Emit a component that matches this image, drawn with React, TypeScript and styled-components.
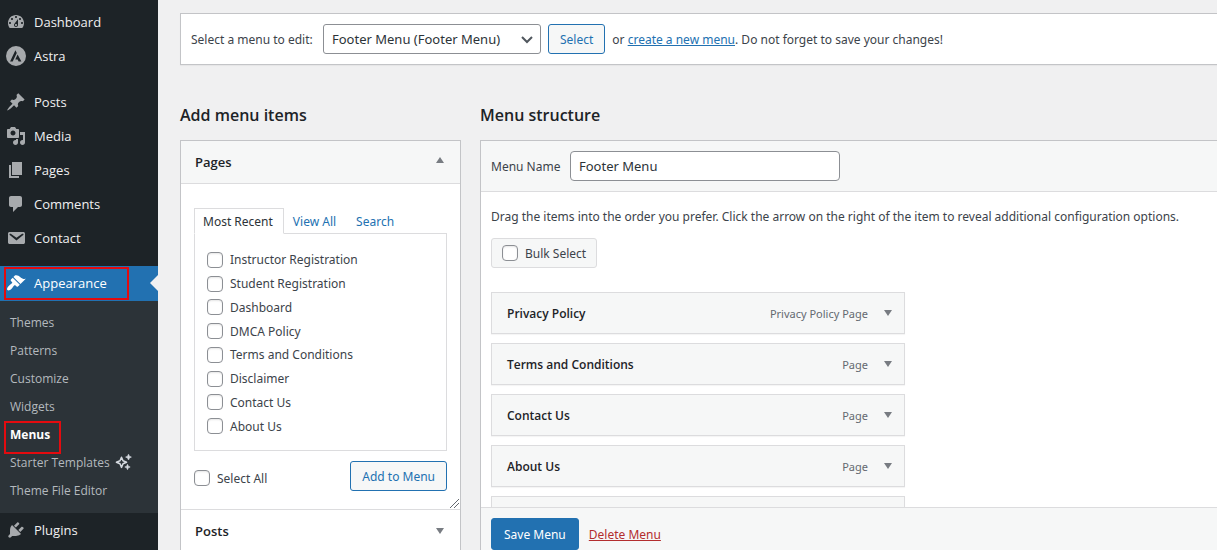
import React from "react";
import styled, { createGlobalStyle, css } from "styled-components";

const GlobalStyle = createGlobalStyle`
  *, *::before, *::after { box-sizing: border-box; }
  body {
    margin: 0;
    background: #f0f0f1;
    color: #3c434a;
    font-family: "Noto Sans", sans-serif;
    font-size: 12px;
    line-height: 19px;
  }
  h2, h3, p, ul { margin: 0; padding: 0; }
  ul { list-style: none; }
  button, input, select { font-family: inherit; }
`;

const Shell = styled.div`
  display: flex;
  height: 100vh;
  overflow: hidden;
`;

/* ---------- Admin sidebar ---------- */

const Sidebar = styled.nav`
  flex: 0 0 158px;
  background: #1d2327;
  padding-top: 5px;
  font-family: "Open Sans", sans-serif;
`;

const SideGroup = styled.div`
  padding: 12px 0 11px;
`;

const SideLink = styled.a<{ $current?: boolean }>`
  position: relative;
  display: flex;
  align-items: center;
  gap: 8px;
  height: ${(p) => (p.$current ? "35px" : "34px")};
  padding-left: 6px;
  background: ${(p) => (p.$current ? "#2271b1" : "transparent")};
  color: ${(p) => (p.$current ? "#ffffff" : "#f0f0f1")};
  font-size: 13px;
  line-height: 18px;
  text-decoration: none;

  svg {
    width: 20px;
    height: 20px;
    fill: ${(p) => (p.$current ? "#ffffff" : "#a7aaad")};
  }

  ${(p) =>
    p.$current &&
    css`
      padding-bottom: 1px;

      &::after {
        content: "";
        position: absolute;
        right: 0;
        top: 9px;
        border: 8px solid transparent;
        border-left-width: 0;
        border-right-color: #f0f0f1;
      }
    `}
`;

const SubMenu = styled.ul`
  background: #2c3338;
  padding: 7px 0 9px;
`;

const SubLink = styled.a<{ $current?: boolean }>`
  position: relative;
  display: flex;
  align-items: center;
  gap: 5px;
  height: 28px;
  padding-left: 10px;
  color: ${(p) => (p.$current ? "#ffffff" : "#b4b9be")};
  font-weight: ${(p) => (p.$current ? 700 : 400)};
  text-decoration: none;
`;

const Highlight = styled.span<{ $width: number }>`
  position: absolute;
  left: 4px;
  top: 1px;
  width: ${(p) => p.$width}px;
  height: 33px;
  border: 2px solid #e30b0f;
  pointer-events: none;
  z-index: 1;
`;

/* ---------- Shared controls ---------- */

const Button = styled.button<{ $primary?: boolean }>`
  height: ${(p) => (p.$primary ? "32px" : "30px")};
  padding: 0 ${(p) => (p.$primary ? "12px" : "11px")};
  border: 1px solid #2271b1;
  border-radius: 3px;
  background: ${(p) => (p.$primary ? "#2271b1" : "#f6f7f7")};
  color: ${(p) => (p.$primary ? "#ffffff" : "#2271b1")};
  font-size: 12px;
  line-height: 19px;
  white-space: nowrap;
`;

const CheckLabel = styled.label`
  display: flex;
  align-items: center;
  gap: 7px;
`;

const Checkbox = styled.input.attrs({ type: "checkbox" })`
  appearance: none;
  flex: none;
  width: 16px;
  height: 16px;
  margin: 0;
  border: 1px solid #8c8f94;
  border-radius: 4px;
  background: #ffffff;
  box-shadow: inset 0 1px 2px rgba(0, 0, 0, 0.1);
`;

const TextLink = styled.a<{ $danger?: boolean }>`
  color: ${(p) => (p.$danger ? "#b32d2e" : "#2271b1")};
`;

const FieldLabel = styled.label<{ $width: number }>`
  min-width: ${(p) => p.$width}px;
`;

/* ---------- Main column ---------- */

const Main = styled.main`
  flex: 1;
  min-width: 0;
  display: flex;
  flex-direction: column;
  padding: 13px 0 0 22px;
`;

const ManageBar = styled.form`
  display: flex;
  align-items: center;
  gap: 7px;
  padding: 10px;
  border: 1px solid #c3c4c7;
  border-right: 0;
  background: #ffffff;
  box-shadow: 0 1px 1px rgba(0, 0, 0, 0.04);
`;

const SelectWrap = styled.div`
  position: relative;
  width: 218px;

  svg {
    position: absolute;
    right: 8px;
    top: 11px;
    pointer-events: none;
  }
`;

const Select = styled.select`
  appearance: none;
  display: block;
  width: 100%;
  height: 30px;
  padding: 0 24px 0 8px;
  border: 1px solid #8c8f94;
  border-radius: 3px;
  background: #ffffff;
  color: #2c3338;
  font-size: 13px;
`;

const Columns = styled.div`
  flex: 1;
  min-height: 0;
  display: grid;
  grid-template-columns: 281px minmax(0, 1fr);
  column-gap: 19px;
  padding-top: 38px;
`;

const Column = styled.section`
  display: flex;
  flex-direction: column;
  min-height: 0;
`;

const Heading = styled.h2`
  color: #1d2327;
  font-family: "Open Sans", sans-serif;
  font-size: 16px;
  font-weight: 600;
  line-height: 24px;
  margin-bottom: 13px;
`;

const Accordion = styled.div`
  border: 1px solid #c3c4c7;
  border-bottom: 0;
  background: #ffffff;
  flex: 1;
`;

const AccordionHead = styled.button<{ $open?: boolean }>`
  display: flex;
  align-items: center;
  justify-content: space-between;
  width: 100%;
  height: 43px;
  padding: 0 16px 0 14px;
  border: 0;
  border-bottom: 1px solid #dcdcde;
  background: ${(p) => (p.$open ? "#f6f7f7" : "#ffffff")};
  color: #1d2327;
  font-family: "Open Sans", sans-serif;
  font-size: 13px;
  font-weight: 600;
`;

const AccordionBody = styled.div`
  position: relative;
  padding: 24px 13px 18px;
  border-bottom: 1px solid #dcdcde;
`;

const Grip = styled.svg`
  position: absolute;
  right: 1px;
  bottom: 1px;
`;

const Tabs = styled.div`
  display: flex;
  margin-bottom: -1px;
`;

const Tab = styled.a<{ $active?: boolean }>`
  position: relative;
  height: 26px;
  padding: 3px 10px 3px 8px;
  border: 1px solid ${(p) => (p.$active ? "#dcdcde" : "transparent")};
  border-bottom-color: ${(p) => (p.$active ? "#ffffff" : "transparent")};
  background: ${(p) => (p.$active ? "#ffffff" : "transparent")};
  color: ${(p) => (p.$active ? "#2c3338" : "#2271b1")};
  text-decoration: none;
`;

const TabPanel = styled.div`
  padding: 14px 12px 12px;
  border: 1px solid #dcdcde;
`;

const PageList = styled.ul`
  display: grid;
  grid-auto-rows: 1fr;
  height: 190px;
  align-items: center;
`;

const PanelActions = styled.div`
  display: flex;
  align-items: center;
  justify-content: space-between;
  padding-top: 10px;

  ${CheckLabel} {
    padding-top: 4px;
  }
`;

const Structure = styled.div`
  flex: 1;
  min-height: 0;
  display: flex;
  flex-direction: column;
  border: solid #c3c4c7;
  border-width: 1px 0 0 1px;
  background: #ffffff;
`;

const NameBar = styled.div`
  display: flex;
  align-items: center;
  gap: 8px;
  padding: 10px;
  border-bottom: 1px solid #dcdcde;
  background: #f6f7f7;
`;

const NameInput = styled.input`
  width: 270px;
  height: 30px;
  padding: 0 8px;
  border: 1px solid #8c8f94;
  border-radius: 4px;
  background: #ffffff;
  color: #2c3338;
  font-size: 13px;
`;

const StructureBody = styled.div`
  flex: 1;
  min-height: 0;
  overflow: hidden;
  padding: 15px 10px 0;
`;

const BulkSelect = styled(CheckLabel)`
  width: max-content;
  height: 30px;
  margin: 12px 0 24px;
  padding: 0 10px;
  border: 1px solid #dcdcde;
  border-radius: 3px;
  background: #f6f7f7;
`;

const MenuItems = styled.ul`
  display: flex;
  flex-direction: column;
  gap: 9px;
  max-width: 414px;
`;

const MenuItem = styled.li`
  display: flex;
  align-items: center;
  height: 42px;
  padding: 0 12px 0 15px;
  border: 1px solid #dcdcde;
  background: #f6f7f7;
  box-shadow: 0 1px 1px rgba(0, 0, 0, 0.04);
`;

const ItemTitle = styled.span`
  flex: 1;
  color: #1d2327;
  font-family: "Open Sans", sans-serif;
  font-weight: 600;
`;

const ItemType = styled.span`
  color: #646970;
  font-size: 11px;
  margin-right: 16px;
`;

const ArrowButton = styled.button`
  display: flex;
  padding: 0;
  border: 0;
  background: none;
`;

const StructureFooter = styled.div`
  display: flex;
  align-items: center;
  gap: 10px;
  padding: 10px 10px 0;
  border-top: 1px solid #dcdcde;
  background: #f6f7f7;
`;

/* ---------- Drawings ---------- */

const Arrow = ({ up }: { up?: boolean }) => (
  <svg width="8" height="10" viewBox="0 0 8 10" aria-hidden="true">
    <path d={up ? "M0 6 4 0l4 6z" : "M0 2h8L4 8z"} fill="#787c82" />
  </svg>
);

const icons: Record<string, string> = {
  dashboard:
    "M3.76 16h12.48c1.1-1.37 1.76-3.11 1.76-5 0-4.42-3.58-8-8-8s-8 3.58-8 8c0 1.89.66 3.63 1.76 5zM10 4c.55 0 1 .45 1 1s-.45 1-1 1-1-.45-1-1 .45-1 1-1zM6 6c.55 0 1 .45 1 1s-.45 1-1 1-1-.45-1-1 .45-1 1-1zm8 0c.55 0 1 .45 1 1s-.45 1-1 1-1-.45-1-1 .45-1 1-1zm-5.37 5.55L12 7v6c0 1.1-.9 2-2 2s-2-.9-2-2c0-.57.24-1.08.63-1.45zM4 10c.55 0 1 .45 1 1s-.45 1-1 1-1-.45-1-1 .45-1 1-1zm12 0c.55 0 1 .45 1 1s-.45 1-1 1-1-.45-1-1 .45-1 1-1zm-5 3c0-.55-.45-1-1-1s-1 .45-1 1 .45 1 1 1 1-.45 1-1z",
  astra:
    "M10 0a10 10 0 1 0 0 20 10 10 0 0 0 0-20zM9.4 4.2l1.4 2.9-4.1 8.4H4.1zM11.6 8.600l3.800 6.900h-2.800l-1-2H9.300z",
  posts:
    "M10.44 3.02l1.82-1.82 6.36 6.35-1.83 1.82c-1.05-.68-2.48-.57-3.41.36l-.75.75c-.92.93-1.04 2.35-.35 3.41l-1.83 1.82-2.41-2.41-2.8 2.79c-.42.42-3.38 2.71-3.8 2.29s1.86-3.39 2.28-3.81l2.79-2.79L4.1 9.36l1.83-1.82c1.05.69 2.48.57 3.4-.36l.75-.75c.93-.92 1.05-2.35.36-3.41z",
  media:
    "M13 11V4c0-.55-.45-1-1-1h-1.67L9 1H5L3.67 3H2c-.55 0-1 .45-1 1v7c0 .55.45 1 1 1h10c.55 0 1-.45 1-1zM7 4.5c1.38 0 2.5 1.12 2.5 2.5S8.38 9.5 7 9.5 4.5 8.38 4.5 7 5.62 4.5 7 4.5zM14 6h5v10.5c0 1.38-1.12 2.5-2.5 2.5S14 17.88 14 16.5s1.12-2.5 2.5-2.5c.17 0 .34.02.5.05V9h-3V6zm-4 8.05V13h2v3.5c0 1.38-1.12 2.5-2.5 2.5S7 17.88 7 16.5 8.12 14 9.5 14c.17 0 .34.02.5.05z",
  pages: "M6 15V2h10v13H6zm-1 1h8v2H3V5h2v11z",
  comments:
    "M5 2h9c1.1 0 2 .9 2 2v7c0 1.1-.9 2-2 2h-2l-5 5v-5H5c-1.1 0-2-.9-2-2V4c0-1.1.9-2 2-2z",
  contact:
    "M3.87 4h13.25C18.37 4 19 4.59 19 5.79v8.42c0 1.19-.63 1.79-1.88 1.79H3.87c-1.25 0-1.88-.6-1.88-1.79V5.79c0-1.2.63-1.79 1.88-1.79zm6.62 8.6l6.74-5.53c.24-.2.43-.66.13-1.07-.29-.41-.82-.42-1.17-.17l-5.7 3.86L4.8 5.83c-.35-.25-.88-.24-1.17.17-.3.41-.11.87.13 1.07z",
  appearance:
    "M14.48 11.06L7.41 3.99l1.5-1.5c.5-.56 2.3-.47 3.51.32 1.21.8 1.43 1.28 2.91 2.1 1.18.64 2.45 1.26 4.45.85zm-.71.71L6.7 4.7 4.93 6.47c-.39.39-.39 1.02 0 1.41l1.06 1.06c.39.39.39 1.03 0 1.42-.6.6-1.43 1.11-2.21 1.69-.35.26-.7.53-1.01.84C1.43 14.23.4 16.08 1.4 17.07c.99 1 2.84-.03 4.18-1.36.31-.31.58-.66.85-1.02.57-.78 1.08-1.61 1.69-2.21.39-.39 1.02-.39 1.41 0l1.06 1.06c.39.39 1.02.39 1.41 0z",
  plugins:
    "M13.11 4.36L9.87 7.6 8 5.73l3.24-3.24c.35-.34 1.05-.2 1.56.32.52.51.66 1.21.31 1.55zm-8 1.77l.91-1.12 9.01 9.01-1.19.84c-.71.71-2.63 1.16-3.82 1.16H6.14L4.9 17.26c-.59.59-1.54.59-2.12 0-.59-.58-.59-1.53 0-2.12l1.24-1.24v-3.88c0-1.13.4-3.19 1.09-3.89zm7.26 3.97l3.24-3.24c.34-.35 1.04-.21 1.55.31.52.51.66 1.21.31 1.55l-3.24 3.25z",
};

const Icon = ({ name }: { name: string }) => (
  <svg viewBox="0 0 20 20" aria-hidden="true">
    <path d={icons[name]} fillRule={name === "astra" ? "evenodd" : "nonzero"} />
  </svg>
);

const Sparkles = () => (
  <svg width="18" height="18" viewBox="0 0 18 18" fill="none" stroke="#d5dae0" aria-hidden="true">
    <path d="M6.5 4.2 8 7.8l3.600 1.500L8 10.800l-1.500 3.600L5 10.800 1.400 9.300 5 7.800z" strokeWidth="1.500" strokeLinejoin="round" />
    <path d="M13.500 1.200l.9 2 2 .9-2 .9-.9 2-.9-2-2-.9 2-.9zM12.500 11.300l.8 1.900 1.900.8-1.900.8-.8 1.900-.8-1.900-1.900-.8 1.900-.8z" fill="#d5dae0" strokeWidth=".6" />
  </svg>
);

/* ---------- Data ---------- */

const content = [
  { label: "Posts", icon: "posts" },
  { label: "Media", icon: "media" },
  { label: "Pages", icon: "pages" },
  { label: "Comments", icon: "comments" },
  { label: "Contact", icon: "contact" },
];

const appearanceLinks = [
  "Themes",
  "Patterns",
  "Customize",
  "Widgets",
  "Menus",
  "Starter Templates",
  "Theme File Editor",
];

const pages = [
  "Instructor Registration",
  "Student Registration",
  "Dashboard",
  "DMCA Policy",
  "Terms and Conditions",
  "Disclaimer",
  "Contact Us",
  "About Us",
];

const menuItems = [
  { title: "Privacy Policy", type: "Privacy Policy Page" },
  { title: "Terms and Conditions", type: "Page" },
  { title: "Contact Us", type: "Page" },
  { title: "About Us", type: "Page" },
];

export default function App() {
  return (
    <Shell>
      <GlobalStyle />
      <Sidebar aria-label="Main menu">
        <SideLink href="#dashboard"><Icon name="dashboard" />Dashboard</SideLink>
        <SideLink href="#astra"><Icon name="astra" />Astra</SideLink>
        <SideGroup>
          {content.map((item) => (
            <SideLink key={item.label} href={`#${item.icon}`}>
              <Icon name={item.icon} />
              {item.label}
            </SideLink>
          ))}
        </SideGroup>
        <SideLink href="#appearance" $current>
          <Icon name="appearance" />
          Appearance
          <Highlight $width={125} />
        </SideLink>
        <SubMenu>
          {appearanceLinks.map((label) => (
            <li key={label}>
              <SubLink href="#appearance" $current={label === "Menus"}>
                {label}
                {label === "Starter Templates" && <Sparkles />}
                {label === "Menus" && <Highlight $width={57} />}
              </SubLink>
            </li>
          ))}
        </SubMenu>
        <SideLink href="#plugins"><Icon name="plugins" />Plugins</SideLink>
      </Sidebar>

      <Main>
        <ManageBar onSubmit={(e) => e.preventDefault()}>
          <FieldLabel htmlFor="menu-select" $width={125}>Select a menu to edit:</FieldLabel>
          <SelectWrap>
            <Select id="menu-select">
              <option>Footer Menu (Footer Menu)</option>
            </Select>
            <svg width="12" height="10" viewBox="0 0 12 10" aria-hidden="true">
              <path d="M1 2l5 5 5-5" fill="none" stroke="#50575e" strokeWidth="2" />
            </svg>
          </SelectWrap>
          <Button type="submit">Select</Button>
          <span>
            or <TextLink href="#new">create a new menu</TextLink>. Do not forget to save your changes!
          </span>
        </ManageBar>

        <Columns>
          <Column>
            <Heading>Add menu items</Heading>
            <Accordion>
              <AccordionHead type="button" $open aria-expanded="true">
                Pages <Arrow up />
              </AccordionHead>
              <AccordionBody>
                <Tabs>
                  <Tab href="#recent" $active>Most Recent</Tab>
                  <Tab href="#all">View All</Tab>
                  <Tab href="#search">Search</Tab>
                </Tabs>
                <TabPanel>
                  <PageList>
                    {pages.map((page) => (
                      <li key={page}>
                        <CheckLabel><Checkbox />{page}</CheckLabel>
                      </li>
                    ))}
                  </PageList>
                </TabPanel>
                <PanelActions>
                  <CheckLabel><Checkbox />Select All</CheckLabel>
                  <Button type="button">Add to Menu</Button>
                </PanelActions>
                <Grip width="9" height="9" viewBox="0 0 9 9" aria-hidden="true">
                  <path d="M0 9 9 0M4 9l5-5" stroke="#646970" fill="none" />
                </Grip>
              </AccordionBody>
              <AccordionHead type="button" aria-expanded="false">
                Posts <Arrow />
              </AccordionHead>
            </Accordion>
          </Column>

          <Column>
            <Heading>Menu structure</Heading>
            <Structure>
              <NameBar>
                <FieldLabel htmlFor="menu-name" $width={71}>Menu Name</FieldLabel>
                <NameInput id="menu-name" type="text" defaultValue="Footer Menu" />
              </NameBar>
              <StructureBody>
                <p>
                  Drag the items into the order you prefer. Click the arrow on the right of the item
                  to reveal additional configuration options.
                </p>
                <BulkSelect><Checkbox />Bulk Select</BulkSelect>
                <MenuItems>
                  {menuItems.map((item) => (
                    <MenuItem key={item.title}>
                      <ItemTitle>{item.title}</ItemTitle>
                      <ItemType>{item.type}</ItemType>
                      <ArrowButton type="button" aria-label={`Edit ${item.title}`}>
                        <Arrow />
                      </ArrowButton>
                    </MenuItem>
                  ))}
                  <MenuItem />
                </MenuItems>
              </StructureBody>
              <StructureFooter>
                <Button type="button" $primary>Save Menu</Button>
                <TextLink href="#delete" $danger>Delete Menu</TextLink>
              </StructureFooter>
            </Structure>
          </Column>
        </Columns>
      </Main>
    </Shell>
  );
}
